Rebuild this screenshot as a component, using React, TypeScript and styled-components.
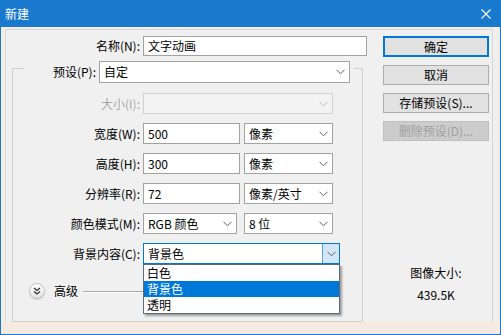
import React from 'react'
import styled, { createGlobalStyle } from 'styled-components'

const GlobalStyle = createGlobalStyle`
  html, body {
    margin: 0;
    padding: 0;
    background: #f0f0f0;
  }
  body {
    font-family: 'Noto Sans CJK SC', 'Noto Sans', sans-serif;
    font-size: 12px;
    color: #000;
  }
  * {
    box-sizing: border-box;
  }
`

const Window = styled.div`
  width: 501px;
  height: 335px;
  display: flex;
  flex-direction: column;
  background: #1979cc;
  padding: 0 1px 1px;
`

const TitleBar = styled.div`
  flex: none;
  height: 27px;
  display: flex;
  align-items: center;
  justify-content: space-between;
  padding: 0 9px 0 4px;
  color: #fff;
  font-size: 12px;
  line-height: 16px;
`

const Frame = styled.div`
  flex: 1;
  display: flex;
  min-height: 0;
  background: #f0f0f0;
  border: 2px solid #f7eae1;
  border-bottom-width: 12px;
  padding: 0 5px 0 2px;
`

const Panel = styled.div`
  flex: 1;
  display: flex;
  border: 1px solid #d6d6d6;
  border-bottom: none;
  padding: 6px 0 0 6px;
`

const LeftColumn = styled.div`
  width: 356px;
  display: flex;
  flex-direction: column;
`

const NameRow = styled.div`
  display: flex;
  align-items: center;
  height: 20px;
`

const Label = styled.span<{ $width: number; $disabled?: boolean }>`
  width: ${p => p.$width}px;
  flex: none;
  text-align: right;
  white-space: nowrap;
  margin-right: 3px;
  line-height: 16px;
  color: ${p => (p.$disabled ? '#a8a8a8' : '#000')};
`

const TextBox = styled.div<{ $width: number }>`
  width: ${p => p.$width}px;
  height: 100%;
  flex: none;
  background: #fff;
  border: 1px solid #a2a2a2;
  padding-left: 4px;
  display: flex;
  align-items: center;
  line-height: 16px;
`

const Group = styled.fieldset`
  flex: 1;
  margin: -3px 0 0;
  width: 351px;
  padding: 0;
  border: 1px solid #d0d0d0;
  display: flex;
  flex-direction: column;
`

const Legend = styled.legend`
  margin-left: 11px;
  padding: 8px 4px 0 0;
  display: flex;
  align-items: center;
  height: 30px;
`

const Rows = styled.div`
  display: flex;
  flex-direction: column;
  gap: 9px;
  padding-top: 10px;
`

const Row = styled.div`
  display: flex;
  align-items: center;
  height: 21px;
`

const FieldGap = styled.span`
  width: 4px;
  flex: none;
`

const ComboWrap = styled.div<{ $width: number }>`
  position: relative;
  width: ${p => p.$width}px;
  height: 100%;
  flex: none;
`

const ComboBox = styled.div<{ $disabled?: boolean; $focused?: boolean }>`
  height: 100%;
  display: flex;
  align-items: stretch;
  background: ${p => (p.$disabled ? '#f3f3f3' : '#fff')};
  border: 1px solid ${p => (p.$focused ? '#0078d7' : p.$disabled ? '#d2d2d2' : '#a2a2a2')};
  line-height: 16px;
`

const ComboValue = styled.span`
  flex: 1;
  display: flex;
  align-items: center;
  padding-left: 4px;
  white-space: nowrap;
`

const ComboArrow = styled.span<{ $focused?: boolean }>`
  width: 17px;
  flex: none;
  display: flex;
  align-items: center;
  justify-content: center;
  margin-right: ${p => (p.$focused ? '0' : '1px')};
  background: ${p => (p.$focused ? '#d3e6f8' : 'transparent')};
  border-left: 1px solid ${p => (p.$focused ? '#5aa0e4' : 'transparent')};
`

const List = styled.div`
  position: absolute;
  top: 100%;
  left: 0;
  right: 0;
  background: #fff;
  border: 1px solid #5a6b7c;
  box-shadow: 2px 2px 2px rgba(0, 0, 0, 0.35);
  z-index: 2;
`

const ListItem = styled.div<{ $active?: boolean }>`
  height: 16px;
  line-height: 16px;
  padding-left: 3px;
  background: ${p => (p.$active ? '#0078d7' : 'transparent')};
  color: ${p => (p.$active ? '#fff' : '#000')};
`

const AdvancedRow = styled.div`
  display: flex;
  align-items: center;
  height: 16px;
  margin: 19px 0 0 16px;
`

const ExpandButton = styled.span`
  width: 16px;
  height: 16px;
  border-radius: 50%;
  border: 1px solid #c4c4c4;
  background: linear-gradient(#ffffff, #e4e4e4);
  box-shadow: 0 1px 1px rgba(0, 0, 0, 0.15);
  display: flex;
  align-items: center;
  justify-content: center;
`

const AdvancedText = styled.span`
  margin-left: 9px;
  line-height: 16px;
`

const Rule = styled.span`
  margin-left: 5px;
  width: 70px;
  height: 1px;
  background: #a9a9a9;
  box-shadow: 0 1px 0 #fff;
`

const RightColumn = styled.div`
  width: 106px;
  margin-left: 15px;
  display: flex;
  flex-direction: column;
`

const Button = styled.div<{ $primary?: boolean; $disabled?: boolean }>`
  height: ${p => (p.$primary ? 21 : 20)}px;
  margin-bottom: 8px;
  display: flex;
  align-items: center;
  justify-content: center;
  line-height: 16px;
  background: ${p => (p.$disabled ? '#cccccc' : '#e1e1e1')};
  border: 1px solid ${p => (p.$primary ? '#0078d7' : p.$disabled ? '#bfbfbf' : '#adadad')};
  box-shadow: ${p => (p.$primary ? 'inset 0 0 0 1px #0078d7' : 'none')};
  color: ${p => (p.$disabled ? '#a0a0a0' : '#000')};
`

const SizeInfo = styled.div`
  margin-top: 113px;
  text-align: center;
  line-height: 22px;
`

const Chevron = ({ light }: { light?: boolean }) => (
  <svg width="9" height="6" viewBox="0 0 9 6">
    <polyline points="0.5,0.8 4.5,4.8 8.5,0.8" fill="none" stroke={light ? '#b8b8b8' : '#5f5f5f'} strokeWidth="1" />
  </svg>
)

type ComboProps = {
  width: number
  value?: string
  disabled?: boolean
  focused?: boolean
  options?: string[]
  active?: number
}

const Combo = ({ width, value, disabled, focused, options, active }: ComboProps) => (
  <ComboWrap $width={width}>
    <ComboBox $disabled={disabled} $focused={focused}>
      <ComboValue>{value}</ComboValue>
      <ComboArrow $focused={focused}>
        <Chevron light={disabled} />
      </ComboArrow>
    </ComboBox>
    {options && (
      <List>
        {options.map((o, i) => (
          <ListItem key={o} $active={i === active}>
            {o}
          </ListItem>
        ))}
      </List>
    )}
  </ComboWrap>
)

const sizeRows = [
  { label: '宽度(W):', value: '500', unit: '像素' },
  { label: '高度(H):', value: '300', unit: '像素' },
  { label: '分辨率(R):', value: '72', unit: '像素/英寸' },
]

const App = () => {
  return (
    <>
      <GlobalStyle />
      <Window>
        <TitleBar>
          <span>新建</span>
          <svg width="10" height="10" viewBox="0 0 10 10">
            <path d="M0.5 0.5 L9.5 9.5 M9.5 0.5 L0.5 9.5" stroke="#fff" strokeWidth="1.1" />
          </svg>
        </TitleBar>
        <Frame>
          <Panel>
            <LeftColumn>
              <NameRow>
                <Label $width={128}>名称(N):</Label>
                <TextBox $width={224}>文字动画</TextBox>
              </NameRow>
              <Group>
                <Legend>
                  <Label $width={72}>预设(P):</Label>
                  <ComboWrap $width={251} style={{ height: 22 }}>
                    <ComboBox>
                      <ComboValue>自定</ComboValue>
                      <ComboArrow>
                        <Chevron />
                      </ComboArrow>
                    </ComboBox>
                  </ComboWrap>
                </Legend>
                <Rows>
                  <Row>
                    <Label $width={127} $disabled>
                      大小(I):
                    </Label>
                    <Combo width={190} disabled />
                  </Row>
                  {sizeRows.map(r => (
                    <Row key={r.label}>
                      <Label $width={127}>{r.label}</Label>
                      <TextBox $width={97}>{r.value}</TextBox>
                      <FieldGap />
                      <Combo width={89} value={r.unit} />
                    </Row>
                  ))}
                  <Row>
                    <Label $width={127}>颜色模式(M):</Label>
                    <Combo width={94} value="RGB 颜色" />
                    <FieldGap style={{ width: 7 }} />
                    <Combo width={89} value="8 位" />
                  </Row>
                  <Row>
                    <Label $width={127}>背景内容(C):</Label>
                    <Combo width={197} value="背景色" focused options={['白色', '背景色', '透明']} active={1} />
                  </Row>
                </Rows>
                <AdvancedRow>
                  <ExpandButton>
                    <svg width="8" height="8" viewBox="0 0 8 8">
                      <polyline points="1,1 4,3.5 7,1" fill="none" stroke="#333" strokeWidth="1.3" />
                      <polyline points="1,4.5 4,7 7,4.5" fill="none" stroke="#333" strokeWidth="1.3" />
                    </svg>
                  </ExpandButton>
                  <AdvancedText>高级</AdvancedText>
                  <Rule />
                </AdvancedRow>
              </Group>
            </LeftColumn>
            <RightColumn>
              <Button $primary>确定</Button>
              <Button>取消</Button>
              <Button>存储预设(S)...</Button>
              <Button $disabled>删除预设(D)...</Button>
              <SizeInfo>
                <div>图像大小:</div>
                <div>439.5K</div>
              </SizeInfo>
            </RightColumn>
          </Panel>
        </Frame>
      </Window>
    </>
  )
}

export default App
